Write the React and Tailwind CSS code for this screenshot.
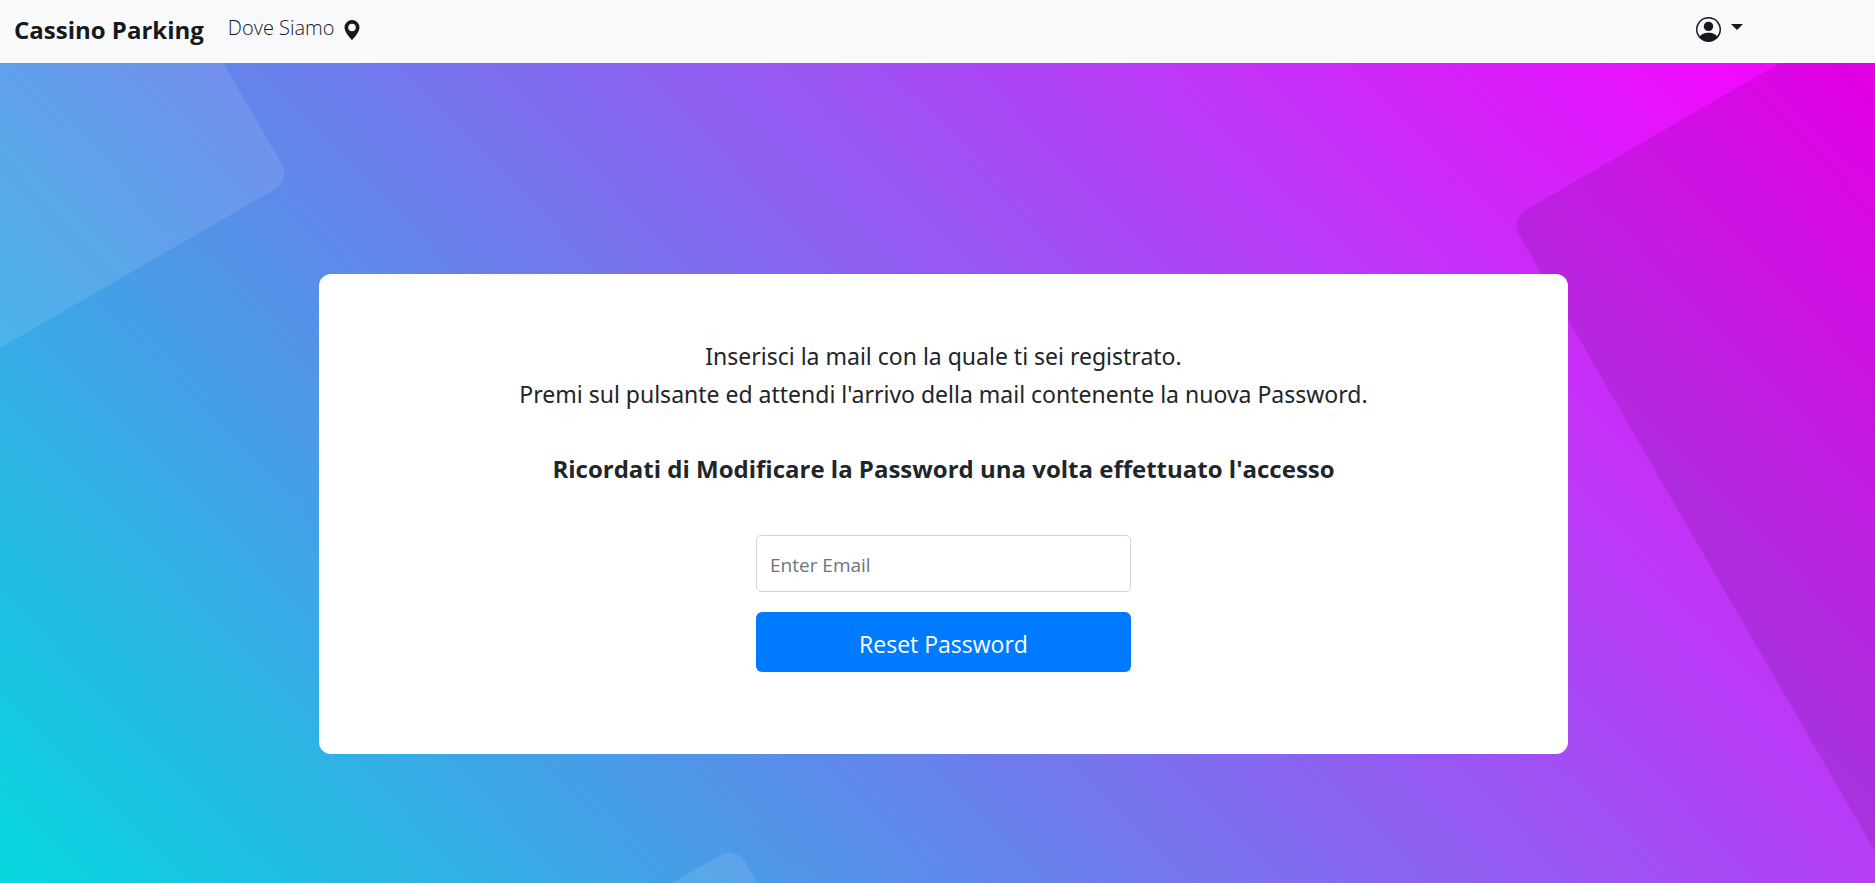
import { BsGeoAltFill, BsPersonCircle } from "react-icons/bs";

function Navbar() {
  return (
    <nav className="flex h-[63px] items-center bg-[#f8f9fb] pb-1 pl-3.5 pr-[132px] text-[#16181b]">
      <a href="#" className="text-[24px] font-bold leading-8">
        Cassino Parking
      </a>
      <a href="#dove-siamo" className="ml-6 flex items-center gap-2 text-[20px] font-light leading-8">
        <span className="pb-1">Dove Siamo</span>
        <BsGeoAltFill size={20} aria-hidden="true" />
      </a>
      <button type="button" aria-label="Account" className="ml-auto flex items-center gap-2.5">
        <BsPersonCircle size={25} aria-hidden="true" />
        <svg width="12" height="6" viewBox="0 0 12 6" className="mb-1.5" aria-hidden="true">
          <path d="M0 0h12L6 6z" fill="currentColor" />
        </svg>
      </button>
    </nav>
  );
}

function Backdrop() {
  return (
    <svg
      className="absolute inset-0 h-full w-full"
      viewBox="0 0 1875 820"
      preserveAspectRatio="xMidYMid slice"
      aria-hidden="true"
    >
      <g transform="translate(291 117) rotate(-30)">
        <rect x="-900" y="-900" width="900" height="900" rx="18" fill="#fff" fillOpacity="0.1" />
      </g>
      <g transform="translate(1510 156) rotate(-30)">
        <rect width="1200" height="1200" rx="18" fill="#000" fillOpacity="0.1" />
      </g>
      <g transform="translate(736 783) rotate(-30)">
        <rect x="-600" width="600" height="600" rx="18" fill="#fff" fillOpacity="0.1" />
      </g>
    </svg>
  );
}

function ResetCard() {
  return (
    <section className="relative flex w-[67%] flex-col items-center rounded-xl bg-white px-6 pb-[82px] pt-[63px] text-center leading-[38px] text-[#212529]">
      <p className="font-['Segoe_UI','Noto_Sans',sans-serif] text-[23px]">
        Inserisci la mail con la quale ti sei registrato.
        <br />
        Premi sul pulsante ed attendi l'arrivo della mail contenente la nuova Password.
      </p>
      <p className="mt-[37px] text-[24px] font-bold">
        Ricordati di Modificare la Password una volta effettuato l'accesso
      </p>
      <form className="mt-[47px] flex w-[375px] max-w-full flex-col gap-5" onSubmit={(e) => e.preventDefault()}>
        <input
          type="email"
          aria-label="Email"
          placeholder="Enter Email"
          className="h-[57px] rounded-[5px] border border-[#ced4da] bg-white px-[13px] pt-0.5 text-[19px] text-[#495057] placeholder:text-[#6c757d]"
        />
        <button type="submit" className="h-[60px] rounded-md bg-[#007bff] pt-1 text-[23px] text-white">
          Reset Password
        </button>
      </form>
    </section>
  );
}

export default function App() {
  return (
    <div className="flex min-h-screen flex-col font-['Segoe_UI','Open_Sans',sans-serif]">
      <Navbar />
      <main className="relative flex grow flex-col items-center overflow-hidden bg-[linear-gradient(46deg,#00dbde_-2%,#fc00ff_99%)] pb-16 pl-3 pt-[211px]">
        <Backdrop />
        <ResetCard />
      </main>
    </div>
  );
}
